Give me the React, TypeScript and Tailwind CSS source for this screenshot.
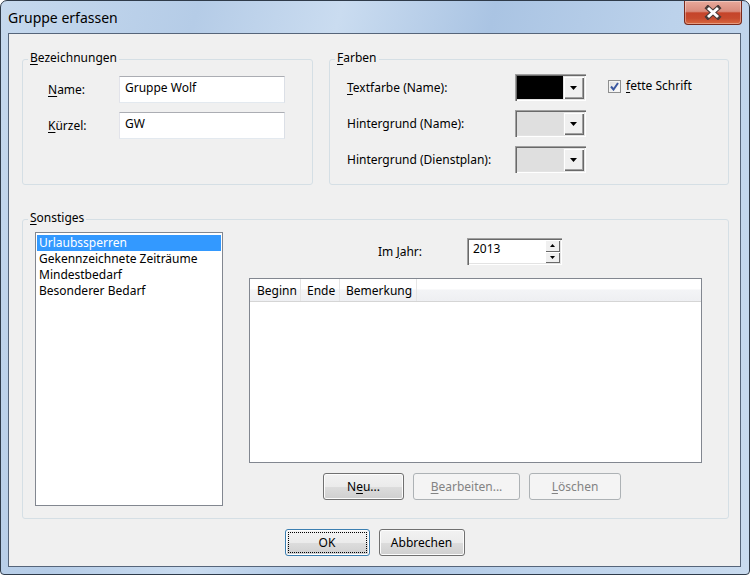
import React from "react";

const U = ({ children }: { children: React.ReactNode }) => (
  <span className="underline decoration-[1px] underline-offset-[2px]">{children}</span>
);

function GroupBox({
  title,
  className,
  children,
}: {
  title: React.ReactNode;
  className: string;
  children?: React.ReactNode;
}) {
  return (
    <div className={`relative rounded-[3px] border border-[#d5dfe5] ${className}`}>
      <span className="absolute left-[5px] top-[-10px] bg-[#f0f0f0] px-[2px] leading-[16px]">{title}</span>
      {children}
    </div>
  );
}

function TextBox({ value, w }: { value: string; w: string }) {
  return (
    <div
      className={`h-[27px] ${w} border border-t-[#abadb3] border-l-[#e2e3ea] border-r-[#dbdfe6] border-b-[#e3e9ef] bg-white pl-[5px] pt-[3px] leading-[16px]`}
    >
      {value}
    </div>
  );
}

function Arrow() {
  return (
    <svg width="7" height="4" viewBox="0 0 7 4">
      <path d="M0 0h7L3.5 4z" fill="#000" />
    </svg>
  );
}

function ColorCombo({ color }: { color: string }) {
  return (
    <div className="flex h-[27px] w-[71px] p-[2px] shadow-[inset_1px_1px_0_#a0a0a0,inset_2px_2px_0_#696969,inset_-1px_-1px_0_#ffffff,inset_-2px_-2px_0_#e3e3e3]">
      <div className={`flex-1 ${color}`} />
      <div className="flex w-[21px] items-center justify-center bg-[#f0f0f0] shadow-[inset_1px_1px_0_#e3e3e3,inset_2px_2px_0_#ffffff,inset_-1px_-1px_0_#696969,inset_-2px_-2px_0_#a0a0a0]">
        <Arrow />
      </div>
    </div>
  );
}

function Btn({
  children,
  w,
  disabled,
  def,
}: {
  children: React.ReactNode;
  w: string;
  disabled?: boolean;
  def?: boolean;
}) {
  if (disabled) {
    return (
      <div
        className={`flex h-[27px] ${w} items-center justify-center rounded-[3px] border border-[#adb2b5] bg-[#f4f4f4] text-[#838383]`}
      >
        {children}
      </div>
    );
  }
  return (
    <div
      className={`relative flex h-[27px] ${w} items-center justify-center rounded-[3px] border ${
        def ? "border-[#3c7fb1]" : "border-[#707070]"
      } bg-[linear-gradient(#f2f2f2_0%,#ebebeb_50%,#dddddd_50%,#cfcfcf_100%)] shadow-[inset_0_0_0_1px_#fcfcfc]`}
    >
      {def && <span className="absolute inset-[2px] border border-dotted border-black" />}
      <span className="relative">{children}</span>
    </div>
  );
}

function CloseButton() {
  return (
    <div className="absolute right-[7px] top-0 flex h-[24px] w-[58px] items-center justify-center rounded-b-[4px] border border-t-0 border-[#7a2a1c] bg-[linear-gradient(#e9a99b_0%,#d98b7c_45%,#c5442a_52%,#c74a2e_75%,#d9693f_100%)] shadow-[inset_0_0_0_1px_rgba(255,255,255,0.35)]">
      <svg width="18" height="15" viewBox="0 0 18 15">
        <path d="M4 3L14 12M14 3L4 12" stroke="#4a3a38" strokeWidth="5" strokeLinecap="square" />
        <path d="M4 3L14 12M14 3L4 12" stroke="#ffffff" strokeWidth="3" strokeLinecap="butt" />
      </svg>
    </div>
  );
}

function CheckBox() {
  return (
    <div className="flex h-[13px] w-[13px] items-center justify-center border border-[#8e8f8f] bg-[linear-gradient(135deg,#dcdcdc,#ffffff)] shadow-[inset_0_0_0_1px_#f4f4f4]">
      <svg width="9" height="9" viewBox="0 0 9 9">
        <path d="M1 4.5L3.5 7.5L8 1" stroke="#3a57a0" strokeWidth="2" fill="none" />
      </svg>
    </div>
  );
}

function Spinner() {
  return (
    <div className="flex h-[27px] w-[95px] bg-white p-[2px] shadow-[inset_1px_1px_0_#a0a0a0,inset_2px_2px_0_#696969,inset_-1px_-1px_0_#ffffff,inset_-2px_-2px_0_#e3e3e3]">
      <div className="flex-1 pl-[4px] pt-[1px] leading-[16px]">2013</div>
      <div className="flex w-[15px] flex-col">
        <div className="flex flex-1 items-center justify-center bg-[#f0f0f0] shadow-[inset_1px_1px_0_#ffffff,inset_-1px_-1px_0_#696969]">
          <svg width="5" height="3" viewBox="0 0 5 3">
            <path d="M0 3h5L2.5 0z" fill="#000" />
          </svg>
        </div>
        <div className="flex flex-1 items-center justify-center bg-[#f0f0f0] shadow-[inset_1px_1px_0_#ffffff,inset_-1px_-1px_0_#696969]">
          <svg width="5" height="3" viewBox="0 0 5 3">
            <path d="M0 0h5L2.5 3z" fill="#000" />
          </svg>
        </div>
      </div>
    </div>
  );
}

export default function App() {
  return (
    <div className="h-[575px] w-[750px] bg-white">
      <div className="relative flex h-[575px] w-[750px] flex-col rounded-t-[7px] rounded-b-[4px] border border-[#2f3b4a] bg-[linear-gradient(105deg,#c6d9ee_0%,#b5cce7_22%,#cadcf0_38%,#aac4e3_55%,#bcd2eb_75%,#c9dbef_100%)] font-['Noto_Sans',sans-serif] text-[12px] leading-[16px] text-black">
        <div className="h-[32px] shrink-0 pl-[7px] pt-[7px] text-[14px] leading-[20px]">Gruppe erfassen</div>
        <CloseButton />
        <div className="ml-[7px] mr-[8px] h-[534px] shrink-0 border border-[#56657a] bg-[#f0f0f0]">
          <div className="pl-[13px] pt-[25px]">
            <div className="flex gap-[16px]">
              <GroupBox
                title={
                  <>
                    <U>B</U>ezeichnungen
                  </>
                }
                className="h-[126px] w-[291px]"
              >
                <div className="flex flex-col gap-[9px] pl-[25px] pt-[16px]">
                  <div className="flex items-center">
                    <div className="w-[71px]">
                      <U>N</U>ame:
                    </div>
                    <TextBox value="Gruppe Wolf" w="w-[166px]" />
                  </div>
                  <div className="flex items-center">
                    <div className="w-[71px]">
                      <U>K</U>ürzel:
                    </div>
                    <TextBox value="GW" w="w-[166px]" />
                  </div>
                </div>
              </GroupBox>
              <GroupBox
                title={
                  <>
                    <U>F</U>arben
                  </>
                }
                className="h-[126px] w-[400px]"
              >
                <div className="flex pl-[17px] pt-[14px]">
                  <div className="flex flex-col gap-[9px]">
                    <div className="flex items-center">
                      <div className="w-[168px]">
                        <U>T</U>extfarbe (Name):
                      </div>
                      <ColorCombo color="bg-black" />
                    </div>
                    <div className="flex items-center">
                      <div className="w-[168px]">Hintergrund (Name):</div>
                      <ColorCombo color="bg-[#dfdfdf]" />
                    </div>
                    <div className="flex items-center">
                      <div className="w-[168px]">Hintergrund (Dienstplan):</div>
                      <ColorCombo color="bg-[#dfdfdf]" />
                    </div>
                  </div>
                  <div className="ml-[22px] mt-[5px] flex h-[14px] items-center gap-[5px]">
                    <CheckBox />
                    <span>
                      <U>f</U>ette Schrift
                    </span>
                  </div>
                </div>
              </GroupBox>
            </div>
            <GroupBox
              title={
                <>
                  <U>S</U>onstiges
                </>
              }
              className="mt-[34px] h-[300px] w-[707px]"
            >
              <div className="flex gap-[26px] pl-[12px] pt-[12px]">
                <div className="h-[274px] w-[188px] border border-[#828790] bg-white px-[1px] pt-[2px]">
                  <div className="bg-[#3399ff] pl-[2px] text-white">Urlaubssperren</div>
                  <div className="pl-[2px]">Gekennzeichnete Zeiträume</div>
                  <div className="pl-[2px]">Mindestbedarf</div>
                  <div className="pl-[2px]">Besonderer Bedarf</div>
                </div>
                <div className="flex w-[453px] flex-col">
                  <div className="mt-[6px] flex items-center pl-[129px]">
                    <div className="w-[89px]">
                      Im <U>J</U>ahr:
                    </div>
                    <Spinner />
                  </div>
                  <div className="mt-[13px] h-[185px] border border-[#828790] bg-white">
                    <div className="flex h-[23px] border-b border-[#d5d5d5] bg-[linear-gradient(#ffffff_0%,#ffffff_45%,#f3f4f6_50%,#eeeff2_100%)]">
                      <div className="w-[51px] border-r border-[#e5e5e5] pl-[7px] pt-[4px]">Beginn</div>
                      <div className="w-[39px] border-r border-[#e5e5e5] pl-[6px] pt-[4px]">Ende</div>
                      <div className="w-[77px] border-r border-[#e5e5e5] pl-[6px] pt-[4px]">Bemerkung</div>
                    </div>
                  </div>
                  <div className="mt-[10px] flex gap-[9px] pl-[74px]">
                    <Btn w="w-[81px]">
                      N<U>e</U>u...
                    </Btn>
                    <Btn w="w-[107px]" disabled>
                      <U>B</U>earbeiten...
                    </Btn>
                    <Btn w="w-[92px]" disabled>
                      <U>L</U>öschen
                    </Btn>
                  </div>
                </div>
              </div>
            </GroupBox>
            <div className="mt-[10px] flex justify-center gap-[9px] pr-[13px]">
              <Btn w="w-[85px]" def>
                OK
              </Btn>
              <Btn w="w-[86px]">Abbrechen</Btn>
            </div>
          </div>
        </div>
      </div>
    </div>
  );
}
